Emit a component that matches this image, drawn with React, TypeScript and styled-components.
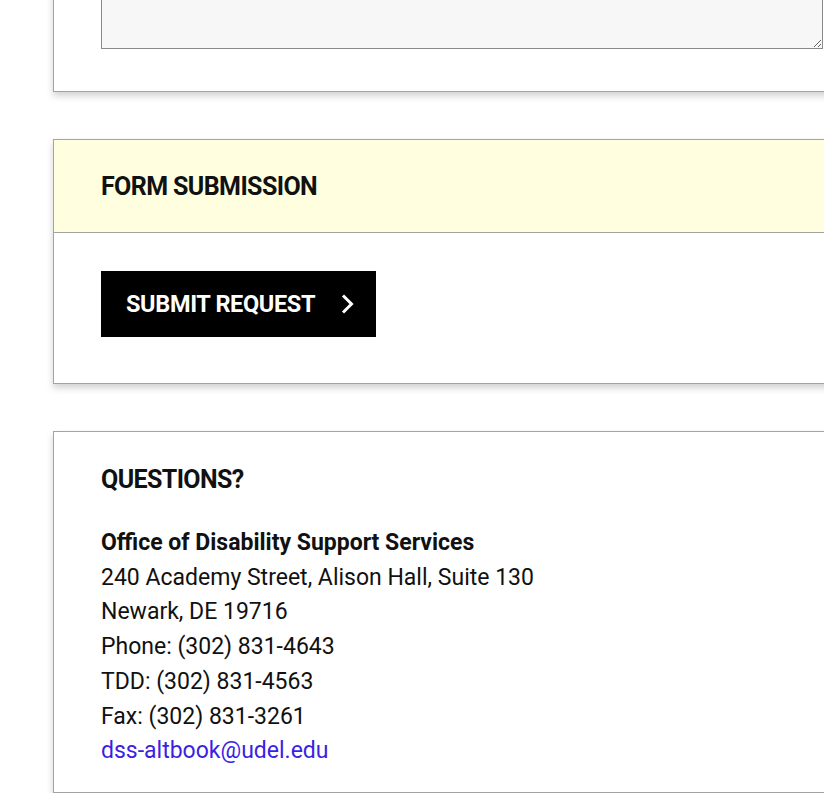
import React from "react";
import styled, { createGlobalStyle } from "styled-components";

const GlobalStyle = createGlobalStyle`
  html, body {
    margin: 0;
    padding: 0;
    background: #ffffff;
    overflow: hidden;
  }
  body {
    font-family: Roboto, "Liberation Sans", Arial, sans-serif;
    color: #111111;
  }
`;

const Page = styled.div`
  display: flex;
  flex-direction: column;
  gap: 47px;
  padding-left: 53px;
  margin-top: -120px;
  width: 818px;
`;

const Card = styled.section`
  background: #ffffff;
  border: 1px solid #a3a3a3;
  box-shadow: 0 4px 7px rgba(0, 0, 0, 0.18);
`;

const CardBody = styled.div<{ $top: number; $bottom: number }>`
  padding: ${({ $top, $bottom }) => `${$top}px 47px ${$bottom}px`};
`;

const CardHeader = styled.div`
  background: #ffffe0;
  border-bottom: 1px solid #a3a3a3;
  height: 92px;
  display: flex;
  align-items: center;
  padding: 0 47px;
`;

const Heading = styled.h2`
  margin: 0;
  font-family: Roboto, "Liberation Sans", Arial, sans-serif;
  font-weight: 700;
  font-size: 25px;
  letter-spacing: -0.6px;
  text-transform: uppercase;
  color: #111111;
  line-height: 1;
`;

const TextArea = styled.textarea`
  display: block;
  width: 100%;
  box-sizing: border-box;
  height: 128px;
  background: #f7f7f7;
  border: 1px solid #8a8a8a;
  border-radius: 0;
  resize: vertical;
  font-family: Roboto, sans-serif;
`;

const SubmitButton = styled.button`
  display: inline-flex;
  align-items: center;
  gap: 26px;
  height: 66px;
  padding: 0 22px 0 25px;
  background: #000000;
  color: #ffffff;
  border: none;
  font-family: Roboto, "Liberation Sans", Arial, sans-serif;
  font-weight: 700;
  font-size: 23.5px;
  letter-spacing: -0.35px;
  text-transform: uppercase;
  cursor: pointer;
`;

const Address = styled.address`
  margin-top: 34px;
  font-style: normal;
  font-size: 23px;
  line-height: 34.7px;
  color: #111111;
`;

const Strong = styled.div`
  font-weight: 700;
`;

const MailLink = styled.a`
  color: #3b1fe3;
  text-decoration: none;
`;

function Chevron(): JSX.Element {
  return (
    <svg width="13" height="20" viewBox="0 0 13 20" aria-hidden="true">
      <path
        d="M2 1.5 L10.5 10 L2 18.5"
        fill="none"
        stroke="#ffffff"
        strokeWidth="3"
        strokeLinecap="butt"
        strokeLinejoin="miter"
      />
    </svg>
  );
}

function App(): JSX.Element {
  return (
    <>
      <GlobalStyle />
      <Page>
        <Card>
          <CardBody $top={40} $bottom={42}>
            <TextArea aria-label="Comments" />
          </CardBody>
        </Card>

        <Card>
          <CardHeader>
            <Heading>Form Submission</Heading>
          </CardHeader>
          <CardBody $top={38} $bottom={46}>
            <SubmitButton type="button">
              Submit Request
              <Chevron />
            </SubmitButton>
          </CardBody>
        </Card>

        <Card>
          <CardBody $top={35} $bottom={23}>
            <Heading as="h3">Questions?</Heading>
            <Address>
              <Strong>Office of Disability Support Services</Strong>
              <div>240 Academy Street, Alison Hall, Suite 130</div>
              <div>Newark, DE 19716</div>
              <div>Phone: (302) 831-4643</div>
              <div>TDD: (302) 831-4563</div>
              <div>Fax: (302) 831-3261</div>
              <MailLink href="mailto:dss-altbook@udel.edu">
                dss-altbook@udel.edu
              </MailLink>
            </Address>
          </CardBody>
        </Card>
      </Page>
    </>
  );
}

export default App;
